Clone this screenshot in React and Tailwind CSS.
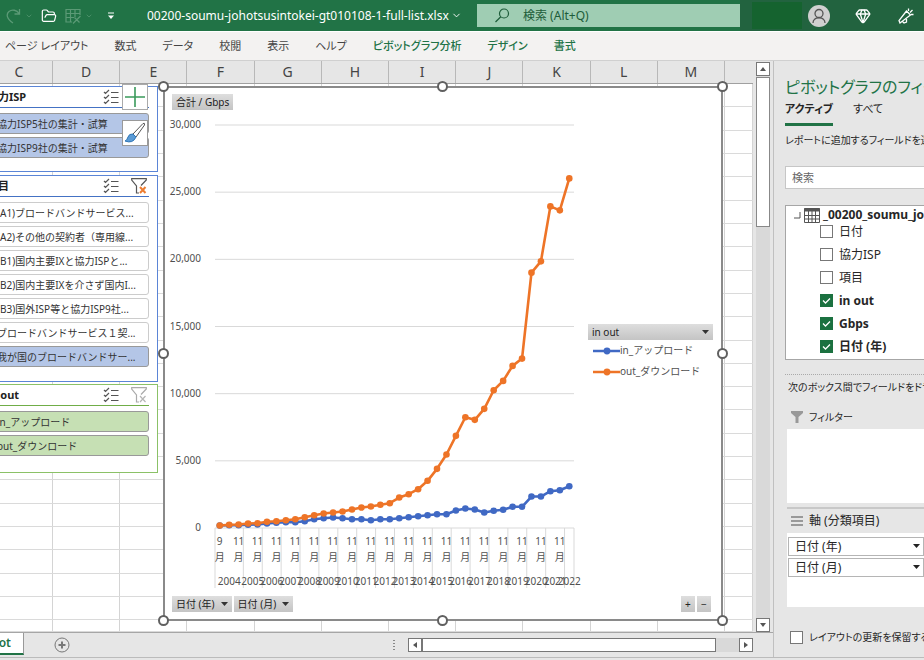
import React, { useState } from 'react';
import { ChevronDown, FolderOpen, Gem } from 'lucide-react';

const columns = ['C', 'D', 'E', 'F', 'G', 'H', 'I', 'J', 'K', 'L', 'M'];

const ribbonTabs = [
    { name: 'ページ レイアウト' },
    { name: '数式' },
    { name: 'データ' },
    { name: '校閲' },
    { name: '表示' },
    { name: 'ヘルプ' },
    { name: 'ピボットグラフ分析', contextual: true },
    { name: 'デザイン', contextual: true },
    { name: '書式', contextual: true },
];

// Gbps, two measurements a year
const upload = [186, 208, 208, 238, 260, 335, 387, 431, 431, 506, 655, 729, 781, 729, 655, 655, 580, 655, 655, 729, 804, 878, 952, 1027, 1027, 1302, 1451, 1376, 1153, 1280, 1354, 1577, 1577, 2344, 2344, 2738, 2812, 3110];
const download = [186, 238, 260, 335, 357, 461, 506, 580, 655, 804, 952, 1079, 1153, 1228, 1376, 1525, 1600, 1726, 1845, 2269, 2515, 2887, 3512, 4405, 5469, 6860, 8244, 8050, 8869, 10253, 10952, 12068, 12611, 19010, 19850, 23942, 23645, 26025];

const PLOT = { left: 50, right: 409, top: 15, bottom: 418 };
const step = (PLOT.right - PLOT.left) / upload.length;
const xAt = (i) => PLOT.left + step * (i + 0.5);
const yAt = (v) => PLOT.bottom - (v / 30000) * (PLOT.bottom - PLOT.top);

const Series = ({ data, color }) => (
    <g fill={color} stroke={color}>
        <polyline fill="none" strokeWidth="2.6" strokeLinejoin="round" points={data.map((v, i) => `${xAt(i)},${yAt(v)}`).join(' ')} />
        {data.map((v, i) => (
            <circle key={i} cx={xAt(i)} cy={yAt(v)} r="3.3" stroke="none" />
        ))}
    </g>
);

const TrafficChart = () => {
    const years = Array.from({ length: 19 }, (_, i) => 2004 + i);
    // 2004 holds three months, 2022 only one, the rest two
    const edges = [0, ...years.map((_, i) => Math.min(3 + i * 2, 38))];

    return (
        <svg viewBox="0 0 416 486" className="h-[486px] w-[416px] shrink-0 overflow-visible text-[10px]" fill="#505050" role="img" aria-label="合計 / Gbps">
            {[30000, 25000, 20000, 15000, 10000, 5000, 0].map((v) => (
                <g key={v}>
                    <line x1={PLOT.left} x2={PLOT.right} y1={yAt(v)} y2={yAt(v)} stroke="#d9d9d9" />
                    <text x="36" y={yAt(v) + 3} textAnchor="end">{v.toLocaleString('en-US')}</text>
                </g>
            ))}
            {edges.map((e) => (
                <line key={e} x1={PLOT.left + e * step} x2={PLOT.left + e * step} y1={PLOT.bottom} y2="478" stroke="#d9d9d9" />
            ))}
            {years.map((year, i) => (
                <g key={year} textAnchor="middle">
                    {xAt(i * 2) < 400 && (
                        <>
                            <text x={xAt(i * 2)} y="435">{i === 0 ? 9 : 11}</text>
                            <text x={xAt(i * 2)} y="451">月</text>
                        </>
                    )}
                    <text x={PLOT.left + ((edges[i] + edges[i + 1]) / 2) * step} y="475">{year}</text>
                </g>
            ))}
            <Series data={upload} color="#4069c4" />
            <Series data={download} color="#ee7427" />
        </svg>
    );
};

const MultiSelectIcon = () => (
    <svg viewBox="0 0 16 16" className="h-4 w-4" fill="none" stroke="#555" strokeWidth="1.2">
        <path d="M1 3l1.5 1.5L6 1M1 8l1.5 1.5L6 6M1 13l1.5 1.5L6 11M8 3.5h7.5M8 8.5h7.5M8 13.5h7.5" />
    </svg>
);

const ClearFilterIcon = ({ active }) => (
    <svg viewBox="0 0 16 16" className="h-4 w-4" fill="none" strokeWidth="1.2">
        <path d="M8 15H5.500V8L.7 2V.7h14.600V2L10 7.500" stroke={active ? '#555' : '#aaa'} />
        <path d="M9 9l5.500 6M14.500 9L9 15" stroke={active ? '#ed7d31' : '#b5b5b5'} strokeWidth={active ? 2 : 1.2} />
    </svg>
);

const slicerTheme = {
    blue: { box: 'border-[#5b85d6]', line: 'border-[#4472c4]', on: 'bg-[#b4c6e7]' },
    green: { box: 'border-[#8bc167]', line: 'border-[#70ad47]', on: 'bg-[#c6e0b4]' },
};

const Slicer = ({ title, items, selected, theme, filter, className }) => {
    const t = slicerTheme[theme];
    return (
        <section className={`-ml-5 mr-px border bg-white pl-1.5 pr-2 [font-feature-settings:normal] ${t.box} ${className}`}>
            <div className={`flex h-[21px] items-center border-b ${t.line}`}>
                <h3 className="flex-1 text-[11px] font-bold text-[#222]">{title}</h3>
                <button aria-label="複数選択"><MultiSelectIcon /></button>
                <div className="ml-3 flex w-[18px]">
                    {filter && <button aria-label="フィルターのクリア"><ClearFilterIcon active={filter === 'active'} /></button>}
                </div>
            </div>
            <div className="mt-[5px] flex flex-col gap-[3px]">
                {items.map((item) => (
                    <button
                        key={item}
                        className={`h-[21px] overflow-hidden whitespace-nowrap rounded-[3px] border pl-[9px] text-left text-[10px] leading-[18px] text-[#333] ${selected.includes(item) ? `${t.on} border-[#999]` : 'border-[#ccc] bg-white'}`}
                    >
                        {item}
                    </button>
                ))}
            </div>
        </section>
    );
};

const ispItems = ['協力ISP5社の集計・試算', '協力ISP9社の集計・試算'];
const topicItems = [
    '(A1)ブロードバンドサービス...',
    '(A2)その他の契約者（専用線...',
    '(B1)国内主要IXと協力ISPと...',
    '(B2)国内主要IXを介さず国内I...',
    '(B3)国外ISP等と協力ISP9社...',
    'ブロードバンドサービス１契...',
    '我が国のブロードバンドサー...',
];
const inOutItems = ['in_アップロード', 'out_ダウンロード'];

const Handle = ({ className }) => (
    <span className={`absolute h-[11px] w-[11px] rounded-full border-2 border-[#606060] bg-white ${className}`} />
);

const FieldButton = ({ children, arrow, className = '' }) => (
    <button className={`flex h-4 items-center justify-between gap-1.5 bg-[#d0d0d0] bg-gradient-to-b from-[#dedede] to-[#c4c4c4] px-1 text-[10px] leading-4 text-[#222] ${className}`}>
        {children}
        {arrow && <svg viewBox="0 0 7 4" className="h-1 w-[7px]"><path d="M0 0h7L3.500 4z" fill="#333" /></svg>}
    </button>
);

const LegendItem = ({ color, label }) => (
    <li className="flex h-[21px] items-center whitespace-nowrap pl-[5px] text-[10px] text-[#505050] [font-feature-settings:normal]">
        <svg viewBox="0 0 27 8" className="h-2 w-[27px] shrink-0">
            <path d="M0 4h27" stroke={color} strokeWidth="2.5" />
            <circle cx="14" cy="4" r="3.4" fill={color} />
        </svg>
        {label}
    </li>
);

const PivotChart = () => (
    <div className="relative mb-[11px] mt-0.5 flex w-[560px] flex-col border-2 border-[#8a8a8a] bg-white">
        <div className="flex pl-[7px] pt-[6px]">
            <FieldButton>合計 / Gbps</FieldButton>
        </div>
        <div className="flex flex-1">
            <TrafficChart />
            <div className="ml-[7px] mt-[214px] w-[125px]">
                <FieldButton arrow className="w-full">in out</FieldButton>
                <ul>
                    <LegendItem color="#4069c4" label="in_アップロード" />
                    <LegendItem color="#ee7427" label="out_ダウンロード" />
                </ul>
            </div>
        </div>
        <div className="flex gap-0.5 pb-[7px] pl-[7px] pr-2.5">
            <FieldButton arrow>日付 (年)</FieldButton>
            <FieldButton arrow>日付 (月)</FieldButton>
            <span className="flex-1" />
            <FieldButton className="w-3.5">+</FieldButton>
            <FieldButton className="w-3.5">−</FieldButton>
        </div>
        <Handle className="-left-[7px] -top-[7px]" />
        <Handle className="-top-[7px] left-1/2 -ml-1.5" />
        <Handle className="-right-[7px] -top-[7px]" />
        <Handle className="-left-[7px] top-1/2 -mt-1.5" />
        <Handle className="-right-[7px] top-1/2 -mt-1.5" />
        <Handle className="-bottom-[7px] -left-[7px]" />
        <Handle className="-bottom-[7px] left-1/2 -ml-1.5" />
        <Handle className="-bottom-[7px] -right-[7px]" />
    </div>
);

const GridLines = () => (
    <div aria-hidden="true" className="absolute inset-0">
        <div className="absolute inset-0 grid grid-cols-[53px_repeat(10,1fr)_28px]">
            {[...columns, 'N'].map((c) => <span key={c} className="border-r border-[#d4d4d4]" />)}
        </div>
        <div className="absolute inset-0 grid grid-rows-[repeat(23,2fr)_1fr]">
            {Array.from({ length: 24 }, (_, i) => <span key={i} className="border-b border-[#dadada]" />)}
        </div>
    </div>
);

const Header = () => (
    <header className="flex h-8 items-center border-b border-white bg-[#217346] text-white">
        <div className="flex w-[147px] shrink-0 items-center pl-1.5">
            <button aria-label="やり直し" className="shrink-0">
                <svg viewBox="0 0 15 16" className="h-4 w-[15px]" fill="none" stroke="#5b9a76" strokeWidth="1.3"><path d="M13.500 1v5H8.500M13 5.500C11 2 6 1 3 3.500S.5 11 7 15" /></svg>
            </button>
            <ChevronDown size={8} className="ml-1 shrink-0 text-[#5b9a76]" />
            <button aria-label="開く" className="ml-2 shrink-0"><FolderOpen size={16} strokeWidth={1.8} /></button>
            <button aria-label="テーブル" className="ml-2 shrink-0">
                <svg viewBox="0 0 16 16" className="h-4 w-4" fill="none" stroke="#5b9a76" strokeWidth="1.2"><path d="M7 14H1V1.500h14V7M1 5.500h14M1 9.500h8M5.500 1.500V14M10 1.500V9M15.500 8L8 15.500M9.500 9.500l5 5" /></svg>
            </button>
            <ChevronDown size={8} className="ml-1 shrink-0 text-[#5b9a76]" />
            <button aria-label="クイック アクセス ツール バーのユーザー設定" className="ml-3.5 shrink-0">
                <svg viewBox="0 0 8 8" className="h-2 w-2"><path d="M1 1h6" stroke="#fff" /><path d="M1 3.500h6L4 7z" fill="#fff" /></svg>
            </button>
        </div>
        <button className="flex w-[330px] shrink-0 items-center gap-0.5 whitespace-nowrap text-[12px]">
            00200-soumu-johotsusintokei-gt010108-1-full-list.xlsx
            <ChevronDown size={11} className="shrink-0" />
        </button>
        <label className="flex h-[23px] flex-1 items-center bg-[#9fcdb3] pl-[18px] text-[#1d5c39]">
            <svg viewBox="0 0 15 15" className="h-[15px] w-[15px] shrink-0" fill="none" stroke="currentColor" strokeWidth="1.2"><circle cx="9" cy="5.500" r="4.500" /><path d="M5.800 8.800L.5 14" /></svg>
            <input aria-label="検索 (Alt+Q)" placeholder="検索 (Alt+Q)" className="ml-[13px] w-0 flex-1 text-[12px] outline-none placeholder:text-[#1d5c39]" />
        </label>
        <div className="flex h-full w-[184px] shrink-0 items-center bg-[#22633f] pl-3">
            <span className="h-[27px] w-[50px] shrink-0 bg-[#15632f]" />
            <button aria-label="アカウント" className="ml-1.5 flex h-[22px] w-[22px] shrink-0 items-center justify-center rounded-full bg-[#d0d0d0]">
                <svg viewBox="0 0 16 16" className="h-4 w-4" fill="none" stroke="#555" strokeWidth="1.3"><circle cx="8" cy="5.500" r="4" /><path d="M2 15c0-7 12-7 12 0" /></svg>
            </button>
            <button aria-label="プレミアム" className="ml-[25px] shrink-0"><Gem size={16} strokeWidth={2} /></button>
            <button aria-label="新機能" className="ml-[27px] shrink-0">
                <svg viewBox="0 0 16 16" className="h-4 w-4" fill="none" stroke="#fff" strokeWidth="1.3">
                    <path d="M8.500 3L1 12.500 2 15l10.500-8zM4.500 13.500L6 15l2.500-1V11M10.500 3V.5M12 4.500L14.500 2M13 6.500h2.500" />
                </svg>
            </button>
        </div>
    </header>
);

const Check = ({ label, checked, onChange, bold }) => (
    <label className={`flex items-center gap-1.5 ${bold ? 'font-bold' : ''}`}>
        <span className="relative flex">
            <input type="checkbox" checked={checked} onChange={onChange} className="h-[13px] w-[13px] appearance-none border border-[#777] bg-white checked:border-[#1b7140] checked:bg-[#1b7140]" />
            {checked && (
                <svg viewBox="0 0 13 13" className="pointer-events-none absolute inset-0 h-[13px] w-[13px]"><path d="M3 6.500l2.500 2.500 4.500-4.500" fill="none" stroke="#fff" strokeWidth="1.3" /></svg>
            )}
        </span>
        {label}
    </label>
);

const AreaSelect = ({ label }) => (
    <div className="relative">
        <select aria-label={label} className="h-[19px] w-full appearance-none border border-[#b5b5b5] bg-white pl-1.5 text-[12px] leading-4">
            <option>{label}</option>
        </select>
        <svg viewBox="0 0 7 4" className="pointer-events-none absolute right-1 top-[7px] h-1 w-[7px]"><path d="M0 0h7L3.500 4z" fill="#222" /></svg>
    </div>
);

const FieldPane = () => {
    const [fields, setFields] = useState({ 日付: false, 協力ISP: false, 項目: false, 'in out': true, Gbps: true, '日付 (年)': true });
    const [defer, setDefer] = useState(false);
    const toggle = (name) => setFields((prev) => ({ ...prev, [name]: !prev[name] }));

    return (
        <aside className="w-[151px] shrink-0 overflow-hidden whitespace-nowrap border-l border-[#c0c0c0] bg-[#e6e6e6] pl-[11px] text-[11px] text-[#262626]">
            <h2 className="mt-[14px] text-[16px] leading-6 text-[#217346]">ピボットグラフのフィールド</h2>
            <div className="flex h-[27px] items-start gap-5">
                <button className="h-[27px] border-b-[3px] border-[#217346] pb-1 font-bold">アクティブ</button>
                <button className="h-[24px] pb-1">すべて</button>
            </div>
            <p className="mt-1 text-[10px] leading-5">レポートに追加するフィールドを選択してください:</p>
            <input aria-label="検索" placeholder="検索" className="mt-4 h-[23px] w-[200px] border border-[#c6c6c6] bg-white px-1.5 text-[11px] placeholder:text-[#666]" />

            <div className="mt-4 h-[155px] w-[200px] border border-[#a6a6a6] bg-white pl-[7px] text-[12px]">
                <div className="flex h-[17px] items-center font-bold">
                    <svg viewBox="0 0 8 8" className="h-2 w-2 shrink-0"><path d="M7 1v6H1" fill="none" stroke="#555" /></svg>
                    <svg viewBox="0 0 16 16" className="mx-[3px] h-4 w-4 shrink-0" fill="none" stroke="#555">
                        <path d="M.5 1.500h15v14H.5zM.5 8.500h15M.5 12h15M4.500 4v11M8 4v11M11.500 4v11" />
                        <path d="M0 3h16" strokeWidth="3" />
                    </svg>
                    _00200_soumu_johotsusin
                </div>
                <div className="-mt-[3px] ml-[27px] flex flex-col">
                    {Object.entries(fields).map(([name, on]) => (
                        <div key={name} className="flex h-[23px] items-center">
                            <Check label={name} checked={on} bold={on} onChange={() => toggle(name)} />
                        </div>
                    ))}
                </div>
            </div>

            <p className="mt-[14px] border-t border-dotted border-[#aaa] pl-[3px] text-[10px] leading-6">次のボックス間でフィールドをドラッグしてください:</p>
            <h4 className="mt-1.5 flex h-6 items-center gap-1.5 pl-1.5 text-[10px]">
                <svg viewBox="0 0 12 12" className="h-3 w-3"><path d="M0 0h12v2L7.500 6v6h-3V6L0 2z" fill="#999" /></svg>
                フィルター
            </h4>
            <div className="ml-0.5 h-[74px] bg-white" />
            <h4 className="ml-0.5 mt-1 flex h-[26px] items-center gap-1.5 border-t-2 border-[#c8c8c8] pl-1">
                <svg viewBox="0 0 12 10" className="h-2.5 w-3" stroke="#999" strokeWidth="2"><path d="M0 1h12M0 5h12M0 9h12" /></svg>
                <span className="text-[12px]">軸 (分類項目)</span>
            </h4>
            <div className="ml-0.5 flex h-[74px] flex-col gap-0.5 bg-white pl-px pt-1">
                <AreaSelect label="日付 (年)" />
                <AreaSelect label="日付 (月)" />
            </div>
            <div className="ml-[5px] mt-[23px] text-[10px]">
                <Check label="レイアウトの更新を保留する" checked={defer} onChange={() => setDefer(!defer)} />
            </div>
        </aside>
    );
};

const Arrow = ({ className }) => (
    <svg viewBox="0 0 6 6" className={`h-1.5 w-1.5 ${className}`}><path d="M0 5h6L3 1z" fill="#555" /></svg>
);

const App = () => (
    <div className="flex min-h-screen flex-col overflow-hidden bg-[#e6e6e6] font-['Noto_Sans','Noto_Sans_CJK_JP',sans-serif] [font-feature-settings:'palt']">
        <Header />
        <nav className="flex h-[29px] items-center gap-[26px] whitespace-nowrap border-b border-[#d0d0d0] bg-[#f3f2f1] pl-[5px] text-[11px]">
            {ribbonTabs.map((tab) => (
                <button key={tab.name} className={tab.contextual ? 'font-medium text-[#217346]' : 'text-[#444]'}>{tab.name}</button>
            ))}
        </nav>

        <div className="flex flex-1">
            <div className="flex min-w-0 flex-1 flex-col">
                <div className="flex flex-1">
                    <main className="flex min-w-0 flex-1 flex-col">
                        <div className="grid h-[23px] grid-cols-[53px_repeat(10,1fr)_28px] border-b border-[#a0a0a0] text-[14px] leading-[22px] text-[#444]">
                            {columns.map((c) => (
                                <span key={c} className={`border-r border-[#b8b8b8] text-center ${c === 'C' ? 'pr-3.5' : ''}`}>{c}</span>
                            ))}
                        </div>
                        <div className="relative flex flex-1 bg-white">
                            <GridLines />
                            <div className="relative w-[159px] shrink-0">
                                <Slicer title="協力ISP" theme="blue" items={ispItems} selected={ispItems} className="mt-0.5 h-[86px]" />
                                <Slicer title="項目" theme="blue" filter="active" items={topicItems} selected={[topicItems[6]]} className="mt-[3px] h-[207px]" />
                                <Slicer title="in out" theme="green" filter="idle" items={inOutItems} selected={inOutItems} className="mt-0.5 h-[89px]" />
                                <button aria-label="グラフ要素" className="absolute right-[11px] top-0 flex h-[26px] w-[26px] items-center justify-center border border-[#aaa] bg-white">
                                    <svg viewBox="0 0 20 20" className="h-5 w-5"><path d="M10 0v20M0 10h20" stroke="#3a9a5b" strokeWidth="1.6" /></svg>
                                </button>
                                <button aria-label="グラフ スタイル" className="absolute right-[11px] top-9 flex h-[26px] w-[26px] items-center justify-center border border-[#999] bg-white">
                                    <svg viewBox="0 0 22 22" className="h-[22px] w-[22px]" stroke="#555">
                                        <path d="M9 12L19 1.500q2-1 1.500 1.500L12 15z" fill="#fff" />
                                        <path d="M9 12q-4-.5-5 3T1 19q8 3 11-4z" fill="#5b9bd5" stroke="#2e75b6" />
                                    </svg>
                                </button>
                            </div>
                            <div className="ml-1 flex">
                                <PivotChart />
                            </div>
                        </div>
                    </main>
                    <div className="flex w-5 shrink-0 flex-col items-center pt-px">
                        <div className="flex w-3.5 flex-1 flex-col bg-[#d9d9d9]">
                            <button aria-label="上へ" className="flex h-3.5 items-center justify-center border border-[#777] bg-white"><Arrow /></button>
                            <span className="mt-px h-[150px] border border-[#888] bg-white" />
                            <button aria-label="下へ" className="mt-auto flex h-3.5 items-center justify-center border border-[#777] bg-white"><Arrow className="rotate-180" /></button>
                        </div>
                    </div>
                </div>
                <div className="flex h-[25px] items-center border-t border-[#a6a6a6] pr-5">
                    <button className="flex h-[22px] w-6 shrink-0 items-center justify-end self-start border-b-2 border-r border-b-[#217346] border-r-[#999] bg-white pr-3 text-[12px] font-semibold text-[#217346]">Pivot</button>
                    <button aria-label="新しいシート" className="ml-[30px]">
                        <svg viewBox="0 0 16 16" className="h-4 w-4" fill="none" stroke="#777"><circle cx="8" cy="8" r="7" /><path d="M8 4.500v7M4.500 8h7" strokeWidth="2" /></svg>
                    </button>
                    <span className="ml-auto flex flex-col gap-0.5">
                        {[0, 1, 2, 3].map((i) => <i key={i} className="h-px w-0.5 bg-[#888]" />)}
                    </span>
                    <div className="ml-[13px] flex h-3.5 w-[345px] bg-[#d9d9d9]">
                        <button aria-label="左へ" className="flex w-3.5 items-center justify-center border border-[#777] bg-white"><Arrow className="-rotate-90" /></button>
                        <span className="w-[294px] border border-[#777] bg-white" />
                        <button aria-label="右へ" className="ml-auto flex w-3.5 items-center justify-center border border-[#777] bg-white"><Arrow className="rotate-90" /></button>
                    </div>
                </div>
            </div>
            <FieldPane />
        </div>
        <footer className="h-[3px] border-t border-[#bbb] bg-[#e6e6e6]" />
    </div>
);

export default App;
